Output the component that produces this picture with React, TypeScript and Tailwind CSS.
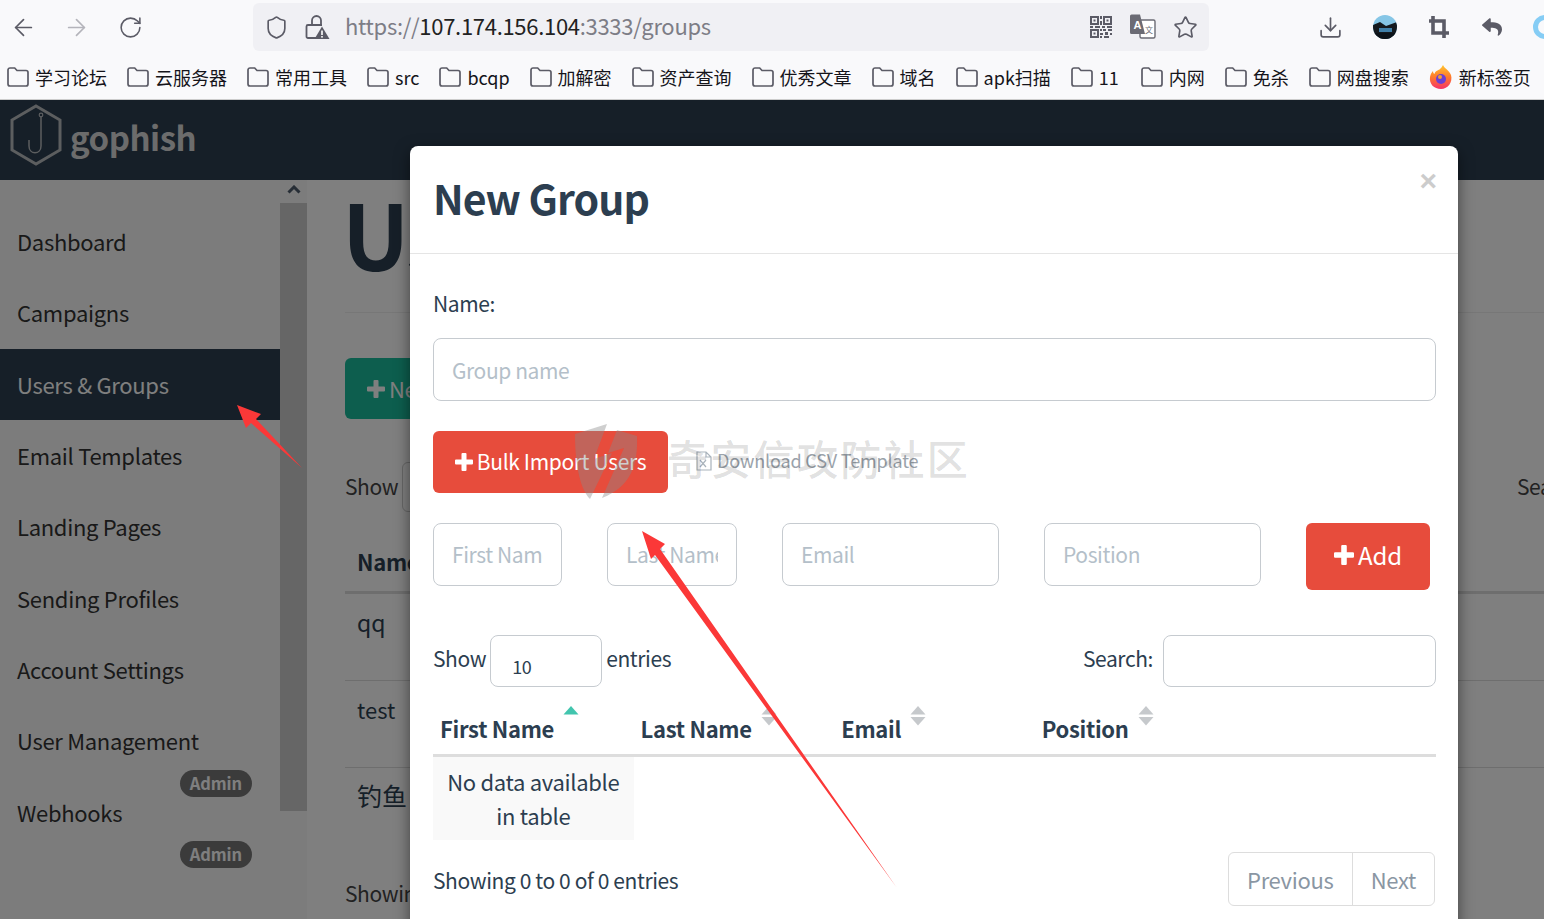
import React from 'react';
import { ArrowLeft, ArrowRight, RotateCw, Shield, Download, Star } from 'lucide-react';
import { FaReply } from 'react-icons/fa';

const bookmarks = ['学习论坛', '云服务器', '常用工具', 'src', 'bcqp', '加解密', '资产查询', '优秀文章', '域名', 'apk扫描', '11', '内网', '免杀', '网盘搜索'];
const navItems = ['Dashboard', 'Campaigns', 'Users & Groups', 'Email Templates', 'Landing Pages', 'Sending Profiles', 'Account Settings', 'User Management', 'Webhooks'];
const inputClasses = 'h-[63px] rounded-[8px] border border-[#c6cbd0] bg-white px-[18px] text-[21px] tracking-[-0.4px] placeholder:text-[#b4bfc9] outline-none';

const PlusIcon = ({ size }: { size: number }) => (
    <svg width={size} height={size} viewBox="0 0 18 18" fill="currentColor" className="mr-[4px] shrink-0">
        <path d="M6.500 1a1 1 0 0 1 1-1h3a1 1 0 0 1 1 1v5.500H17a1 1 0 0 1 1 1v3a1 1 0 0 1-1 1h-5.500V17a1 1 0 0 1-1 1h-3a1 1 0 0 1-1-1v-5.500H1a1 1 0 0 1-1-1v-3a1 1 0 0 1 1-1h5.500z" />
    </svg>
);

const FolderIcon = () => (
    <svg width="22" height="20" viewBox="0 0 22 20" fill="none" stroke="#5b5b66" strokeWidth="1.7" className="shrink-0">
        <path d="M1 3a2 2 0 0 1 2-2h4.700l2.300 2.500h9a2 2 0 0 1 2 2V17a2 2 0 0 1-2 2H3a2 2 0 0 1-2-2z" />
    </svg>
);

const LockIcon = () => (
    <svg width="26" height="26" viewBox="0 0 26 26" fill="none">
        <path d="M8 11V6.500a4.500 4.500 0 0 1 9 0V11" stroke="#5b5b66" strokeWidth="1.800" />
        <path d="M12 24H4a1.500 1.500 0 0 1-1.500-1.500v-10A1.500 1.500 0 0 1 4 11h14" stroke="#5b5b66" strokeWidth="1.800" />
        <path d="M18 12.500l7.500 12.500h-15z" fill="#5b5b66" />
        <rect x="17.200" y="16.500" width="1.600" height="4.500" fill="#fff" />
        <rect x="17.200" y="22" width="1.600" height="1.600" fill="#fff" />
    </svg>
);

const QrIcon = () => (
    <svg width="22" height="22" viewBox="0 0 22 22" fill="#5b5b66">
        <path fillRule="evenodd" d="M0 0h9v9H0zM2 2v5h5V2zM13 0h9v9h-9zM15 2v5h5V2zM0 13h9v9H0zM2 15v5h5v-5z" />
        <rect x="3.500" y="3.500" width="2" height="2" />
        <rect x="16.500" y="3.500" width="2" height="2" />
        <rect x="3.500" y="16.500" width="2" height="2" />
        <path d="M10 0h2v3h-2zM10 5h2v4h-2zM0 10h3v2H0zM5 10h5v2H5zM12 10h3v2h-3zM17 10h5v2h-5zM10 13h2v2h-2zM13 13h3v2h-3zM18 13h4v2h-4zM10 17h3v2h-3zM15 16h3v3h-3zM20 17h2v2h-2zM10 20h2v2h-2zM14 20h5v2h-5z" />
    </svg>
);

const TranslateIcon = () => (
    <svg width="27" height="26" viewBox="0 0 27 26">
        <rect x="11" y="6" width="15" height="18" rx="1.500" fill="#fff" stroke="#6b6b74" strokeWidth="1.400" />
        <path d="M1 2a1.500 1.500 0 0 1 1.500-1.500H11L16 20H2.500A1.500 1.500 0 0 1 1 18.500z" fill="#6b6b74" />
        <text x="4.500" y="14.500" fontSize="11" fontWeight="700" fill="#fff" fontFamily="Liberation Sans">A</text>
        <text x="16" y="19" fontSize="8" fill="#6b6b74" fontFamily="Noto Sans CJK SC">文</text>
    </svg>
);

const CropIcon = () => (
    <svg width="22" height="24" viewBox="0 0 22 24" fill="none" stroke="#5b5b66" strokeWidth="3.600">
        <path d="M5 1v17h16M1 6h15v17" />
    </svg>
);

const FirefoxIcon = () => (
    <svg width="24" height="26" viewBox="0 0 24 26">
        <defs>
            <linearGradient id="fx" x1="0" y1="0" x2="0" y2="1">
                <stop offset="0" stopColor="#ffc52e" />
                <stop offset="0.500" stopColor="#ff7a2b" />
                <stop offset="1" stopColor="#f5326b" />
            </linearGradient>
        </defs>
        <path d="M14 1c1 3 6 5 8 10 2 7-3 14-10 14S0 20 1 13c.5-3 2-5 3-6 0 1.500.5 2.500 1.500 3C6 7 10 6 11 5c1-1 2-2 3-4z" fill="url(#fx)" />
        <circle cx="12" cy="15" r="5" fill="#6b3fd4" />
        <circle cx="11" cy="13" r="2" fill="#f5a02e" />
    </svg>
);

const AvatarIcon = () => (
    <svg width="24" height="24" viewBox="0 0 24 24" className="ml-[30px] shrink-0">
        <defs>
            <clipPath id="av"><circle cx="12" cy="12" r="12" /></clipPath>
        </defs>
        <g clipPath="url(#av)">
            <rect width="24" height="24" fill="#86c6e6" />
            <path d="M0 10l7-3 6 4 11-4v17H0z" fill="#14191e" />
            <path d="M6 13h13v4H6z" fill="#3f7fa8" />
            <path d="M0 18h24v6H0z" fill="#0c1218" />
        </g>
    </svg>
);

const GophishLogo = () => (
    <svg width="54" height="62" viewBox="0 0 54 62" fill="none" className="mb-[10px]">
        <path d="M27 2 51 16v30L27 60 3 46V16z" stroke="#b9bcbf" strokeWidth="3" />
        <path d="M32 12v30c0 9-12 9-12 0v-6" stroke="#b9bcbf" strokeWidth="1.500" />
        <circle cx="32" cy="11" r="1.800" stroke="#b9bcbf" strokeWidth="1.200" />
    </svg>
);

const SortCarets = ({ active }: { active?: boolean }) => (
    <svg width="16" height="20" viewBox="0 0 16 20" className="ml-[9px] -mt-[25px] shrink-0">
        <path d="M8 0l7.500 8.500H.5z" fill={active ? '#42c5ae' : '#c6c9cc'} />
        {!active && <path d="M.5 11h15L8 19.500z" fill="#c6c9cc" />}
    </svg>
);

const Sidebar = () => (
    <aside className="relative flex w-[307px] shrink-0 bg-[#f9f9f9]">
        <div className="w-[280px] pt-[26px]">
            {navItems.map(item => (
                <div key={item} className={`relative flex h-[71.3px] items-center pl-[17px] text-[22px] tracking-[-0.3px] ${item === 'Users & Groups' ? 'bg-[#2c3e50] text-white' : 'text-[#333]'}`}>
                    {item}
                    {(item === 'User Management' || item === 'Webhooks') && (
                        <span className="absolute right-[28px] top-[65px] rounded-full bg-[#777] px-[10px] py-[3px] text-[16.5px] leading-[21px] font-bold tracking-[-0.1px] text-white">Admin</span>
                    )}
                </div>
            ))}
        </div>
        <div className="flex w-[27px] flex-col">
            <div className="flex h-[23px] items-center justify-center bg-[#f9f9f9] pb-[4px]">
                <svg width="14" height="9" viewBox="0 0 14 9" fill="none" stroke="#4e5d6c" strokeWidth="3">
                    <path d="M1.500 7.500 7 2l5.500 5.500" />
                </svg>
            </div>
            <div className="h-[608px] bg-[#cdcdcd]" />
        </div>
    </aside>
);

const PageBehind = () => (
    <main className="min-w-0 flex-1 pl-[38px] text-[#2c3e50]">
        <div className="h-[133px] overflow-hidden border-b border-[#eee]">
            <h1 className="-ml-[3px] text-[90px] leading-[105px] font-bold tracking-[-2px] whitespace-nowrap">Users &amp; Groups</h1>
        </div>
        <button className="mt-[45px] flex h-[61px] w-[200px] items-center rounded-[6px] bg-[#1abc9c] pl-[22px] text-[22px] tracking-[-0.3px] text-white">
            <PlusIcon size={18} /> New Group
        </button>
        <div className="mt-[48px] flex h-[40px] items-center text-[21px] tracking-[-0.4px] text-[#444]">
            <span>Show</span>
            <div className="ml-[4px] h-[50px] w-[100px] rounded-[6px] border border-[#ccc]" />
            <span className="ml-auto mr-[-43px]">Search:</span>
        </div>
        <div className="mt-[22px] flex h-[65px] items-center border-b-[3px] border-[#ddd] pl-[12px] pt-[2px] text-[22px] font-bold tracking-[-0.3px]">Name</div>
        <div className="flex h-[87px] border-b border-[#ddd] pl-[12px] pt-[11px] text-[23px]">qq</div>
        <div className="flex h-[87px] border-b border-[#ddd] pl-[12px] pt-[12px] text-[22px]">test</div>
        <div className="flex h-[88px] pl-[12px] pt-[9px] text-[25px]">钓鱼</div>
        <div className="mt-[22px] whitespace-nowrap text-[21px] tracking-[-0.4px] text-[#444]">Showing 1 to 3 of 3 entries</div>
    </main>
);

const BrowserChrome = () => (
    <div className="h-[100px] border-b border-[#ccc] bg-[#f9f9fb] text-[#15141a]">
        <div className="flex h-[55px] items-center pb-[1px]">
            <ArrowLeft size={27} strokeWidth={1.5} className="ml-[10px] shrink-0 text-[#5b5b66]" />
            <ArrowRight size={27} strokeWidth={1.5} className="ml-[26px] shrink-0 text-[#b4b4bb]" />
            <RotateCw size={25} strokeWidth={1.5} className="ml-[28px] shrink-0 text-[#5b5b66]" />
            <div className="ml-[110px] flex h-[48px] w-[956px] shrink-0 items-center rounded-[6px] bg-[#f0f0f4] pl-[11px] pr-[11px]">
                <Shield size={25} strokeWidth={1.6} className="text-[#5b5b66]" />
                <div className="ml-[15px]"><LockIcon /></div>
                <div className="ml-[15px] pb-[3px] text-[22px] tracking-[-0.3px] text-[#7d7d86]">
                    https://<span className="text-[#222]">107.174.156.104</span>:3333/groups
                </div>
                <div className="ml-auto flex items-center gap-[17px]">
                    <QrIcon />
                    <TranslateIcon />
                    <Star size={25} strokeWidth={1.6} className="text-[#5b5b66]" />
                </div>
            </div>
            <Download size={25} strokeWidth={1.6} className="ml-[109px] shrink-0 text-[#5b5b66]" />
            <AvatarIcon />
            <div className="ml-[31px]"><CropIcon /></div>
            <FaReply className="ml-[32px] shrink-0 text-[20px] text-[#5b5b66]" />
            <div className="ml-[31px] h-[24px] w-[24px] shrink-0 rounded-full border-[5px] border-[#86cdf5]" />
        </div>
        <div className="flex h-[44px] items-center pl-[7px] text-[18px] whitespace-nowrap">
            {bookmarks.map(b => (
                <div key={b} className={`flex items-center gap-[6px] ${b === '11' ? 'mr-[22px]' : 'mr-[20px]'}`}>
                    <FolderIcon />
                    <span>{b}</span>
                </div>
            ))}
            <div className="flex items-center gap-[6px]">
                <FirefoxIcon />
                <span>新标签页</span>
            </div>
        </div>
    </div>
);

const NewGroupModal = () => (
    <div className="absolute left-[410px] top-[146px] h-[790px] w-[1048px] rounded-[8px] bg-white text-[#2c3e50] shadow-[0_5px_15px_rgba(0,0,0,0.5)]">
        <div className="relative h-[108px] border-b border-[#e5e5e5] pl-[23px] pt-[21px]">
            <h4 className="text-[41px] leading-[60px] font-bold tracking-[-0.9px]">New Group</h4>
            <span className="absolute right-[21px] top-[17px] font-['Liberation_Sans'] text-[30px] leading-[36px] font-bold text-[#ccc]">×</span>
        </div>
        <div className="pl-[23px] pr-[22px]">
            <div className="pt-[35px] text-[21px] leading-[29px] tracking-[-0.4px]">Name:</div>
            <input className={`${inputClasses} mt-[20px] block w-[1003px]`} placeholder="Group name" />
            <div className="mt-[30px] flex items-center">
                <button className="flex h-[62px] w-[235px] items-center justify-center rounded-[6px] bg-[#e74c3c] text-[21px] tracking-[-0.35px] text-white">
                    <PlusIcon size={18} /> Bulk Import Users
                </button>
                <div className="ml-[26px] flex items-center gap-[4px] pb-[3px] text-[18px] tracking-[-0.15px] text-[#9ba3ab]">
                    <svg width="19" height="20" viewBox="0 0 19 20" fill="none" stroke="#a9b3bc" strokeWidth="1.200">
                        <path d="M3 1h9l5 5v13H3zM12 1v5h5" />
                        <path d="M6 9l6 7M12 9l-6 7" />
                    </svg>
                    Download CSV Template
                </div>
            </div>
            <div className="mt-[30px] flex items-start">
                <input className={`${inputClasses} w-[129px] pb-[2px]`} placeholder="First Name" />
                <input className={`${inputClasses} ml-[45px] w-[130px] pb-[2px]`} placeholder="Last Name" />
                <input className={`${inputClasses} ml-[45px] w-[217px] pb-[2px]`} placeholder="Email" />
                <input className={`${inputClasses} ml-[45px] w-[217px] pb-[2px]`} placeholder="Position" />
                <button className="ml-[45px] flex h-[67px] w-[124px] items-center justify-center rounded-[6px] bg-[#e74c3c] pb-[3px] text-[24px] tracking-[-0.2px] text-white">
                    <PlusIcon size={20} /> Add
                </button>
            </div>
            <div className="mt-[45px] flex items-start text-[21px] tracking-[-0.4px]">
                <span className="mt-[8px]">Show</span>
                <div className="ml-[4px] flex h-[52px] w-[112px] items-end rounded-[8px] border border-[#c6cbd0] pb-[6px] pl-[21px] text-[18px]">10</div>
                <span className="ml-[4px] mt-[8px]">entries</span>
                <span className="ml-auto mt-[8px]">Search:</span>
                <input className="ml-[10px] h-[52px] w-[273px] rounded-[8px] border border-[#c6cbd0]" />
            </div>
            <table className="mt-[12px] w-[1003px] table-fixed border-collapse text-[22px] tracking-[-0.3px]">
                <thead>
                    <tr className="border-b-[3px] border-[#ddd]">
                        {['First Name', 'Last Name', 'Email', 'Position'].map((h, i) => (
                            <th key={h} className={`h-[56px] pl-[7px] text-left font-bold ${i === 3 ? 'w-[401px]' : 'w-[200.500px]'}`}>
                                <div className="flex items-center pt-[4px]">
                                    {h}
                                    <SortCarets active={i === 0} />
                                </div>
                            </th>
                        ))}
                    </tr>
                </thead>
                <tbody>
                    <tr>
                        <td className="h-[85px] bg-[#f9f9f9] px-[7px] text-center leading-[34px]">No data available in table</td>
                        <td colSpan={3} />
                    </tr>
                </tbody>
            </table>
            <div className="mt-[12px] flex items-start text-[21px] tracking-[-0.4px]">
                <span className="mt-[13px]">Showing 0 to 0 of 0 entries</span>
                <div className="ml-auto mr-[1px] flex h-[54px] items-center rounded-[6px] border border-[#ddd] text-[22px] tracking-[-0.3px] text-[#8a96a3]">
                    <span className="flex h-full items-center border-r border-[#ddd] px-[18px]">Previous</span>
                    <span className="px-[18px]">Next</span>
                </div>
            </div>
        </div>
    </div>
);

const Watermark = () => (
    <div className="pointer-events-none absolute left-[572px] top-[414px] flex items-center opacity-90">
        <svg width="70" height="90" viewBox="0 0 70 90">
            <path d="M3 20 35 10 22 45l18-6-22 46C8 75 3 50 3 20z" fill="#8a8a8a" fillOpacity="0.45" />
            <path d="M45 16l20 6c1 28-5 50-35 62L52 34l-16 5z" fill="#8a8a8a" fillOpacity="0.45" />
        </svg>
        <span className="ml-[25px] -mt-[4px] text-[41px] leading-none font-medium tracking-[2.300px] text-black/15">奇安信攻防社区</span>
    </div>
);

const App: React.FC = () => {
    return (
        <div className="relative h-[919px] w-[1544px] overflow-hidden bg-white font-['Noto_Sans_CJK_SC','Noto_Sans',sans-serif]">
            <BrowserChrome />
            <div className="flex h-[80px] items-center bg-[#2c3e50] pl-[9px]">
                <GophishLogo />
                <span className="ml-[7px] pb-[4px] text-[33px] font-bold tracking-[-0.5px] text-[#d8d8d8]">gophish</span>
            </div>
            <div className="flex h-[739px]">
                <Sidebar />
                <PageBehind />
            </div>
            <div className="absolute inset-x-0 bottom-0 top-[100px] bg-black/50" />
            <NewGroupModal />
            <Watermark />
            <svg width="1544" height="919" viewBox="0 0 1544 919" className="pointer-events-none absolute left-0 top-0">
                <polygon points="237,405 261,414 256,419 302,468 251,423 246,428" fill="#fb3838" />
                <polygon points="642,531 665,544 660,549 897,888 655,555 651,559" fill="#fb3838" />
            </svg>
        </div>
    );
};

export default App;
